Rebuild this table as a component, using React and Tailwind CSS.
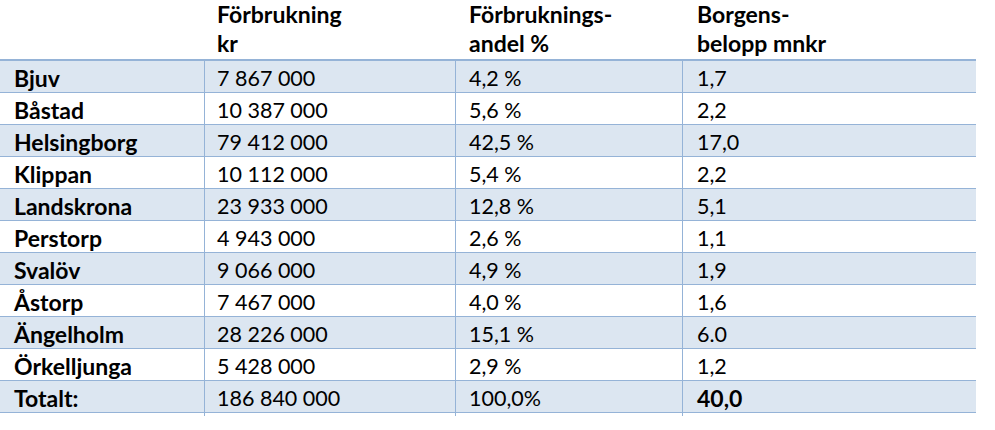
import React from "react";

const rows = [
    ["Bjuv", "7 867 000", "4,2 %", "1,7"],
    ["Båstad", "10 387 000", "5,6 %", "2,2"],
    ["Helsingborg", "79 412 000", "42,5 %", "17,0"],
    ["Klippan", "10 112 000", "5,4 %", "2,2"],
    ["Landskrona", "23 933 000", "12,8 %", "5,1"],
    ["Perstorp", "4 943 000", "2,6 %", "1,1"],
    ["Svalöv", "9 066 000", "4,9 %", "1,9"],
    ["Åstorp", "7 467 000", "4,0 %", "1,6"],
    ["Ängelholm", "28 226 000", "15,1 %", "6.0"],
    ["Örkelljunga", "5 428 000", "2,9 %", "1,2"],
];

const cols = "grid grid-cols-[205px_251px_227px_293px]";

const App = () => {
    return (
        <div className="w-[995px] h-[430px] bg-white text-black font-['Lato','Open_Sans',sans-serif] text-[21.5px]">
            <div className="w-[976px]">
                {/* header */}
                <div className={`${cols} h-[59px] font-bold text-[23px] leading-[29px]`}>
                    <div />
                    <div className="pl-3">Förbrukning<br />kr</div>
                    <div className="pl-[13px]">Förbruknings-<br />andel %</div>
                    <div className="pl-[14px]">Borgens-<br />belopp mnkr</div>
                </div>
                <div className="border-t-2 border-[#95b3d7]">
                    {rows.map((r, i) => (
                        <div
                            key={r[0]}
                            className={`${cols} h-8 border-b border-[#95b3d7] ${i % 2 === 0 ? "bg-[#dce6f1]" : "bg-white"}`}
                        >
                            <div className="pl-[14px] font-bold text-[23px] flex items-center border-r border-[#95b3d7]">{r[0]}</div>
                            <div className="pl-3 flex items-center border-r border-[#95b3d7]">{r[1]}</div>
                            <div className="pl-[13px] flex items-center border-r border-[#95b3d7]">{r[2]}</div>
                            <div className="pl-[14px] flex items-center">{r[3]}</div>
                        </div>
                    ))}
                    <div className={`${cols} h-8 border-b border-[#95b3d7] bg-[#dce6f1]`}>
                        <div className="pl-[14px] font-bold text-[23px] flex items-center border-r border-[#95b3d7]">Totalt:</div>
                        <div className="pl-3 flex items-center border-r border-[#95b3d7]">186 840 000</div>
                        <div className="pl-[13px] flex items-center border-r border-[#95b3d7]">100,0%</div>
                        <div className="pl-[14px] font-bold text-[23px] flex items-center">40,0</div>
                    </div>
                </div>
            </div>
        </div>
    );
};

export default App;
